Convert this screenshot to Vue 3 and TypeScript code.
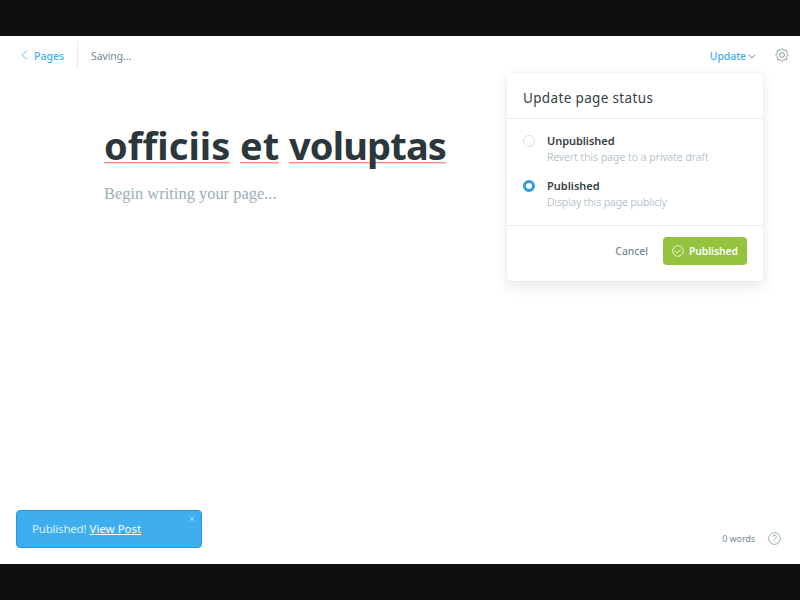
<script setup lang="ts">
import { ref } from 'vue'

interface StatusOption {
  id: string
  label: string
  hint: string
}

const options: StatusOption[] = [
  { id: 'draft', label: 'Unpublished', hint: 'Revert this page to a private draft' },
  { id: 'published', label: 'Published', hint: 'Display this page publicly' },
]
const selected = ref('published')
const titleWords = ['officiis', 'et', 'voluptas']
</script>

<template>
  <div class="frame">
    <main class="editor">
      <header class="topbar">
        <a class="back">
          <svg class="chevron-left" viewBox="0 0 7 10"><path d="M6 .5 1 5l5 4.500" /></svg>
          <span>Pages</span>
        </a>
        <span class="saving">Saving...</span>
        <div class="actions">
          <button class="update">
            <span>Update</span>
            <svg class="chevron-down" viewBox="0 0 8 5"><path d="M.7.7 4 4.100 7.300.7" /></svg>
          </button>
          <svg class="gear" viewBox="0 0 24 24">
            <path d="M9.700 3.200Q12-1 14.300 3.200q.6 1.300 2.300.6 4.600-1.400 3.600 3.600-.7 1.700.6 2.300 4.200 2.300 0 4.600-1.300.6-.6 2.300 1.400 4.600-3.600 3.600-1.700-.7-2.300.6-2.300 4.200-4.600 0-.6-1.300-2.300-.6-4.600 1.400-3.600-3.600.7-1.700-.6-2.300-4.200-2.300 0-4.600 1.300-.6.6-2.300-1.400-4.600 3.600-3.600 1.700.7 2.300-.6z" />
            <circle cx="12" cy="12" r="4.200" />
          </svg>
        </div>
      </header>

      <section class="document">
        <h1 class="title">
          <span v-for="word in titleWords" :key="word" :class="['word', word]">{{ word }}</span>
        </h1>
        <p class="placeholder">Begin writing your page...</p>
      </section>

      <section class="panel">
        <h2 class="panel-title">Update page status</h2>
        <div class="panel-body">
          <div v-for="option in options" :key="option.id" class="option" @click="selected = option.id">
            <span :class="['radio', { on: selected === option.id }]"></span>
            <div :class="['option-text', option.id]">
              <div class="label">{{ option.label }}</div>
              <div class="hint">{{ option.hint }}</div>
            </div>
          </div>
        </div>
        <footer class="panel-footer">
          <button class="cancel">Cancel</button>
          <button class="publish">
            <svg class="check" viewBox="0 0 12 12"><circle cx="6" cy="6" r="5.300" /><path d="m3.200 6.200 1.900 1.900 3.900-3.900" /></svg>
            <span>Published</span>
          </button>
        </footer>
      </section>

      <footer class="bottom">
        <aside class="toast">
          <span class="toast-text">Published!</span>
          <a class="view">View Post</a>
          <svg class="close" viewBox="0 0 6 6"><path d="m.5.5 5 5m0-5-5 5" /></svg>
        </aside>
        <div class="count">
          <span>0 words</span>
          <svg class="help" viewBox="0 0 14 14">
            <circle cx="7" cy="7" r="6.300" />
            <path d="M5.100 5.300a1.900 1.900 0 1 1 2.700 1.700Q7 7.400 7 8.500M7 9.900v.9" />
          </svg>
        </div>
      </footer>
    </main>
  </div>
</template>

<style>
body { margin: 0; }
</style>

<style scoped>
* { box-sizing: border-box; }
.frame {
  width: 800px;
  height: 600px;
  padding: 36px 0;
  background: #0e0e0e;
  font-family: "Noto Sans", "Open Sans", sans-serif;
  overflow: hidden;
}
.editor {
  position: relative;
  display: flex;
  flex-direction: column;
  height: 528px;
  background: #fff;
}
button { padding: 0; border: 0; background: none; font-family: inherit; white-space: nowrap; }
svg { display: block; flex: none; fill: none; stroke: currentColor; }
.topbar {
  display: flex;
  align-items: center;
  height: 38px;
  padding: 0 11px 0 21px;
  font-size: 10.500px;
  line-height: 16px;
}
.topbar span { padding-top: 1px; }
.back {
  display: flex;
  align-items: center;
  gap: 6px;
  width: 57px;
  height: 28px;
  border-right: 1px solid #e3edf0;
  color: #3eb0ef;
  font-weight: 500;
}
.chevron-left { width: 7px; height: 10px; stroke-width: .8; }
.saving { margin-left: 13px; color: #738a94; letter-spacing: -.1px; }
.actions { display: flex; align-items: center; gap: 19px; margin-left: auto; color: #738a94; }
.update {
  display: flex;
  align-items: center;
  gap: 2px;
  color: #3eb0ef;
  font-size: 10.500px;
  font-weight: 500;
}
.update span { letter-spacing: -.1px; }
.chevron-down { width: 8px; height: 5px; margin-top: 2px; color: #738a94; }
.gear { width: 14px; height: 14px; stroke-width: 1.500; }

.document { padding: 48px 104px 0; }
.title {
  display: flex;
  gap: 10px;
  margin: 0;
  color: #2b373c;
  font-size: 38px;
  font-weight: 700;
  line-height: 46px;
}
.word {
  background:
    repeating-linear-gradient(90deg, #ff7f7f 0 2px, #ffa4a4 2px 3px) 0 40px / 100% 1px no-repeat,
    repeating-linear-gradient(90deg, #ffe0e0 0 2px, #ffb8b8 2px 3px) 0 41px / 100% 1px no-repeat;
  white-space: nowrap;
}
.officiis { width: 126px; letter-spacing: .05px; }
.et { width: 39px; }
.voluptas { width: 157px; letter-spacing: -.85px; }
.placeholder {
  margin: 15px 0 0;
  color: #9baeb8;
  font-family: "Liberation Serif", serif;
  font-size: 16.450px;
  line-height: 22px;
}

.panel {
  position: absolute;
  top: 37px;
  left: 507px;
  width: 256px;
  height: 208px;
  border-radius: 3px;
  background: #fff;
  box-shadow: 0 0 1px rgba(0, 0, 0, .12), 0 5px 14px rgba(40, 60, 70, .12);
}
.panel-title {
  height: 46px;
  margin: 0;
  padding: 14px 16px 0;
  border-bottom: 1px solid #e5eff5;
  color: #343f44;
  font-size: 13.500px;
  font-weight: 400;
  letter-spacing: .35px;
  line-height: 22px;
}
.panel-body {
  display: flex;
  flex-direction: column;
  gap: 13px;
  height: 107px;
  padding: 15px 16px 0;
  border-bottom: 1px solid #e5eff5;
}
.option { display: flex; gap: 12px; height: 32px; }
.radio {
  width: 12px;
  height: 12px;
  margin-top: 1px;
  border: 1px solid #d0dfe9;
  border-radius: 50%;
}
.radio.on { border: 3.500px solid #2b9fe3; }
.option-text { margin-top: -1px; }
.label { color: #343f44; font-size: 11px; font-weight: 600; line-height: 16px; }
.hint { color: #9baeb8; font-size: 10.500px; font-weight: 300; line-height: 16px; white-space: nowrap; }
.draft .label { letter-spacing: -.05px; }
.draft .hint { letter-spacing: .08px; }
.panel-footer {
  display: flex;
  align-items: center;
  justify-content: flex-end;
  gap: 15px;
  padding: 11px 16px 0;
}
.cancel { color: #738a94; font-size: 10.300px; font-weight: 500; }
.publish {
  display: flex;
  align-items: center;
  gap: 5px;
  width: 84px;
  height: 28px;
  padding-left: 9px;
  border-radius: 4px;
  background: #94c33f;
  color: #fff;
  font-size: 10.300px;
  font-weight: 600;
}
.publish span { letter-spacing: -.05px; }
.check { width: 12px; height: 12px; stroke-width: .8; }

.bottom {
  display: flex;
  align-items: flex-end;
  justify-content: space-between;
  margin-top: auto;
  padding: 0 19px 16px 16px;
}
.toast {
  display: flex;
  align-items: center;
  width: 186px;
  height: 38px;
  padding: 0 6px 0 15px;
  border: 1px solid #209be5;
  border-radius: 4px;
  background: #3eaeef;
  color: #fff;
  font-size: 11.500px;
  line-height: 18px;
  white-space: nowrap;
}
.toast-text { width: 57.500px; color: #d8effc; letter-spacing: -.2px; }
.view { text-decoration: underline; text-underline-offset: 1px; text-decoration-skip-ink: none; }
.close { align-self: flex-start; width: 6px; height: 6px; margin: 5px 0 0 auto; stroke-width: .8; color: #c5e7fc; }
.count {
  display: flex;
  align-items: center;
  gap: 13px;
  height: 20px;
  color: #738a94;
  font-size: 9px;
}
.count span { letter-spacing: -.1px; }
.help { width: 13px; height: 13px; stroke-width: .8; }
</style>
